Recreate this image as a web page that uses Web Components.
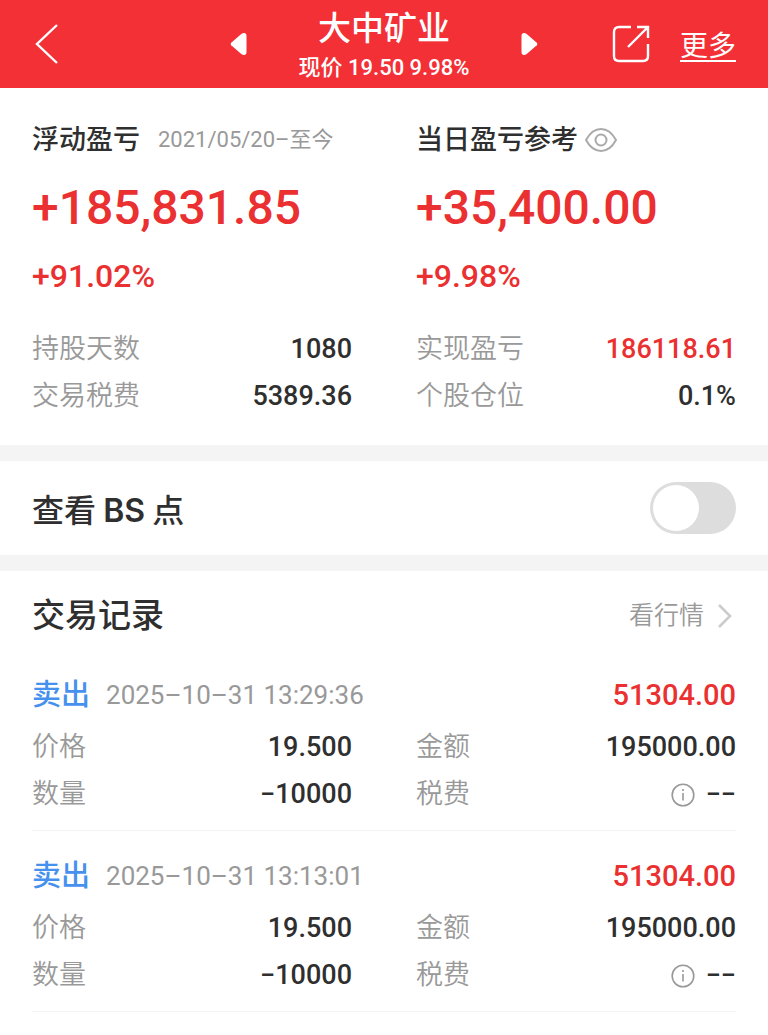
<!DOCTYPE html>
<html lang="zh-CN">
<head>
<meta charset="utf-8">
<meta name="viewport" content="width=device-width, initial-scale=1">
<title>大中矿业</title>
<style>
  :root {
    --brand: #f23036;
    --up: #ea3030;
    --sell: #4691ee;
    --ink: #2f2f2f;
    --muted: #999;
    --band: #f4f4f4;
    --side: 32px;
  }
  body {
    margin: 0;
    background: #fff;
    color: var(--ink);
    font-family: Roboto, "Noto Sans CJK SC", sans-serif;
  }
  main {
    display: flex;
    flex-direction: column;
    gap: 16px;
    background: var(--band);
  }
</style>
</head>
<body>
<stock-header price="19.50" change="9.98%">大中矿业</stock-header>
<main>
  <two-columns>
    <profit-card amount="+185,831.85" percent="+91.02%">
      浮动盈亏
      <span slot="note">2021/05/20–至今</span>
      <stat-row slot="stats" label="持股天数">1080</stat-row>
      <stat-row slot="stats" label="交易税费">5389.36</stat-row>
    </profit-card>
    <profit-card amount="+35,400.00" percent="+9.98%" eye>
      当日盈亏参考
      <stat-row slot="stats" label="实现盈亏" up>186118.61</stat-row>
      <stat-row slot="stats" label="个股仓位">0.1%</stat-row>
    </profit-card>
  </two-columns>
  <switch-row>查看 <b>BS</b> 点</switch-row>
  <trade-list heading="交易记录" more="看行情">
    <trade-record side="卖出" time="2025–10–31 13:29:36" total="51304.00">
      <stat-row label="价格">19.500</stat-row>
      <stat-row label="金额">195000.00</stat-row>
      <stat-row label="数量">−10000</stat-row>
      <stat-row label="税费" info>−−</stat-row>
    </trade-record>
    <trade-record side="卖出" time="2025–10–31 13:13:01" total="51304.00">
      <stat-row label="价格">19.500</stat-row>
      <stat-row label="金额">195000.00</stat-row>
      <stat-row label="数量">−10000</stat-row>
      <stat-row label="税费" info>−−</stat-row>
    </trade-record>
  </trade-list>
</main>

<script>
class BaseElement extends HTMLElement {
  constructor() {
    super()
    this.attachShadow({ mode: 'open' })
    this.render()
  }

  attr(name) {
    return this.getAttribute(name) || ''
  }
}

customElements.define('stock-header', class extends BaseElement {
  render() {
    this.shadowRoot.innerHTML = `
      <style>
        :host {
          display: block;
          background: var(--brand);
          color: #fff;
        }
        header {
          display: grid;
          grid-template-columns: 1fr minmax(0, 308px) 1fr;
          align-items: center;
          height: 88px;
          padding: 0 var(--side);
        }
        button {
          display: block;
          padding: 0;
          border: none;
          background: none;
          color: inherit;
          cursor: pointer;
        }
        svg {
          display: block;
        }
        .back {
          justify-self: start;
        }
        .stock, .actions {
          display: flex;
          align-items: center;
        }
        .stock {
          justify-content: space-between;
        }
        .name {
          padding-top: 2px;
          text-align: center;
        }
        h1 {
          margin: 0;
          font-size: 33px;
          line-height: 46px;
          font-weight: 500;
        }
        p {
          margin: 0;
          font-size: 22px;
          line-height: 32px;
          font-weight: 500;
        }
        .actions {
          justify-self: end;
          gap: 30px;
        }
        a {
          padding-top: 8px;
          border-bottom: 2px solid;
          color: inherit;
          font-size: 28px;
          line-height: 26px;
          text-decoration: none;
        }
      </style>
      <header>
        <button class="back" aria-label="返回">
          <svg width="28" height="42" viewBox="0 0 28 42" fill="none" stroke="currentColor" stroke-width="2.4"><path d="M25 2 5 21 25 40"/></svg>
        </button>
        <div class="stock">
          <button aria-label="上一只">
            <svg width="17" height="24" viewBox="0 0 17 24" fill="currentColor"><path d="M1.2 10.8 11 2.2Q12.6 1 14 1Q16.5 1 16.5 4V20Q16.5 23 14 23Q12.6 23 11 21.8L1.2 13.2Q0 12 1.2 10.8Z"/></svg>
          </button>
          <div class="name">
            <h1><slot></slot></h1>
            <p>现价 ${this.attr('price')} ${this.attr('change')}</p>
          </div>
          <button aria-label="下一只">
            <svg width="17" height="24" viewBox="0 0 17 24" fill="currentColor"><path d="M15.8 10.8 6 2.2Q4.4 1 3 1Q.5 1 .5 4V20Q.5 23 3 23Q4.4 23 6 21.8L15.8 13.2Q17 12 15.8 10.8Z"/></svg>
          </button>
        </div>
        <div class="actions">
          <button aria-label="分享">
            <svg width="38" height="38" viewBox="0 0 38 38" fill="none" stroke="currentColor" stroke-width="2.4">
              <path d="M19 2H7Q2 2 2 7V31Q2 36 7 36H31Q36 36 36 31V19"/>
              <path d="M25 2H36V13M36 2 16 22"/>
            </svg>
          </button>
          <a href="#more">更多</a>
        </div>
      </header>
    `
  }
})

customElements.define('two-columns', class extends BaseElement {
  render() {
    this.shadowRoot.innerHTML = `
      <style>
        :host {
          display: grid;
          grid-template-columns: 1fr 1fr;
          column-gap: 64px;
          padding: 32px var(--side) 25px;
          background: #fff;
        }
      </style>
      <slot></slot>
    `
  }
})

customElements.define('profit-card', class extends BaseElement {
  render() {
    const eye = `
      <button aria-label="显示或隐藏">
        <svg width="32" height="24" viewBox="0 0 32 24" fill="none" stroke="currentColor" stroke-width="2">
          <path d="M1 12Q7 1 16 1T31 12Q25 23 16 23T1 12Z"/>
          <circle cx="16" cy="12" r="5.5"/>
        </svg>
      </button>`
    this.shadowRoot.innerHTML = `
      <style>
        :host {
          display: block;
          min-width: 0;
          white-space: nowrap;
        }
        .head {
          display: flex;
          align-items: center;
          line-height: 40px;
        }
        h2 {
          margin: 0;
          font-size: 27px;
          font-weight: 500;
        }
        ::slotted([slot=note]) {
          margin-left: 18px;
          color: var(--muted);
          font-size: 22px;
        }
        button {
          padding: 0;
          margin-left: 7px;
          border: none;
          background: none;
          color: #aaa;
          cursor: pointer;
        }
        svg {
          display: block;
        }
        .amount, .percent {
          margin-top: 16px;
          color: var(--up);
          font-weight: 500;
        }
        .amount {
          font-size: 48px;
          line-height: 64px;
        }
        .percent {
          font-size: 32px;
          line-height: 40px;
        }
        .stats {
          margin-top: 30px;
        }
      </style>
      <div class="head">
        <h2><slot></slot></h2>
        <slot name="note"></slot>
        ${this.hasAttribute('eye') ? eye : ''}
      </div>
      <div class="amount">${this.attr('amount')}</div>
      <div class="percent">${this.attr('percent')}</div>
      <div class="stats"><slot name="stats"></slot></div>
    `
  }
})

customElements.define('stat-row', class extends BaseElement {
  render() {
    const info = `
      <button aria-label="说明">
        <svg width="24" height="24" viewBox="0 0 24 24" fill="none" stroke="currentColor" stroke-width="1.6">
          <circle cx="12" cy="12" r="10.8"/>
          <path d="M12 10V17.5M12 6V8"/>
        </svg>
      </button>`
    this.shadowRoot.innerHTML = `
      <style>
        :host {
          display: flex;
          align-items: center;
          justify-content: space-between;
          line-height: 47px;
          white-space: nowrap;
        }
        .label {
          color: var(--muted);
          font-size: 27px;
          font-weight: 350;
        }
        .value {
          display: flex;
          align-items: center;
          gap: 11px;
          font-size: 27px;
          font-weight: 500;
        }
        :host([up]) .value {
          color: var(--up);
        }
        button {
          padding: 0;
          border: none;
          background: none;
          color: var(--muted);
          cursor: pointer;
        }
        svg {
          display: block;
        }
      </style>
      <span class="label">${this.attr('label')}</span>
      <span class="value">${this.hasAttribute('info') ? info : ''}<slot></slot></span>
    `
  }
})

customElements.define('switch-row', class extends BaseElement {
  render() {
    this.shadowRoot.innerHTML = `
      <style>
        :host {
          display: block;
          background: #fff;
        }
        label {
          display: flex;
          align-items: center;
          justify-content: space-between;
          padding: 21px var(--side);
          font: 500 32px/52px "Noto Sans CJK SC", sans-serif;
        }
        ::slotted(b) {
          font-family: Inter, sans-serif;
          font-weight: 600;
          line-height: 1;
        }
        input {
          appearance: none;
          display: flex;
          box-sizing: border-box;
          width: 86px;
          height: 52px;
          margin: 0;
          padding: 3px;
          border-radius: 26px;
          background: #ddd;
          cursor: pointer;
        }
        input::before {
          content: "";
          width: 46px;
          height: 46px;
          border-radius: 50%;
          background: #fff;
        }
        input:checked {
          justify-content: flex-end;
          background: var(--brand);
        }
      </style>
      <label>
        <span><slot></slot></span>
        <input type="checkbox" role="switch">
      </label>
    `
  }
})

customElements.define('trade-list', class extends BaseElement {
  render() {
    this.shadowRoot.innerHTML = `
      <style>
        :host {
          display: block;
          padding: 21px var(--side) 24px;
          background: #fff;
        }
        .head {
          display: flex;
          align-items: center;
          justify-content: space-between;
          margin-bottom: 10px;
          line-height: 48px;
        }
        h2 {
          margin: 0;
          font-size: 33px;
          font-weight: 500;
        }
        a {
          display: flex;
          align-items: center;
          gap: 12px;
          color: var(--muted);
          font-size: 25px;
          font-weight: 350;
          text-decoration: none;
        }
        svg {
          display: block;
        }
      </style>
      <div class="head">
        <h2>${this.attr('heading')}</h2>
        <a href="#quote">${this.attr('more')}
          <svg width="20" height="26" viewBox="0 0 20 26" fill="none" stroke="#ccc" stroke-width="2.6"><path d="M3 2 14 13 3 24"/></svg>
        </a>
      </div>
      <slot></slot>
    `
  }
})

customElements.define('trade-record', class extends BaseElement {
  render() {
    this.shadowRoot.innerHTML = `
      <style>
        :host {
          display: block;
          padding: 24px 0 12px;
          border-bottom: 1px solid #f3f3f3;
          white-space: nowrap;
        }
        .head {
          display: flex;
          align-items: center;
          gap: 16px;
          margin-bottom: 8px;
          line-height: 42px;
        }
        .side {
          color: var(--sell);
          font-size: 29px;
          font-weight: 500;
        }
        time {
          color: var(--muted);
          font-size: 26px;
        }
        .total {
          margin-left: auto;
          color: var(--up);
          font-size: 29px;
          font-weight: 500;
        }
        .grid {
          display: grid;
          grid-template-columns: 1fr 1fr;
          column-gap: 64px;
        }
      </style>
      <div class="head">
        <span class="side">${this.attr('side')}</span>
        <time>${this.attr('time')}</time>
        <span class="total">${this.attr('total')}</span>
      </div>
      <div class="grid"><slot></slot></div>
    `
  }
})
</script>
</body>
</html>
